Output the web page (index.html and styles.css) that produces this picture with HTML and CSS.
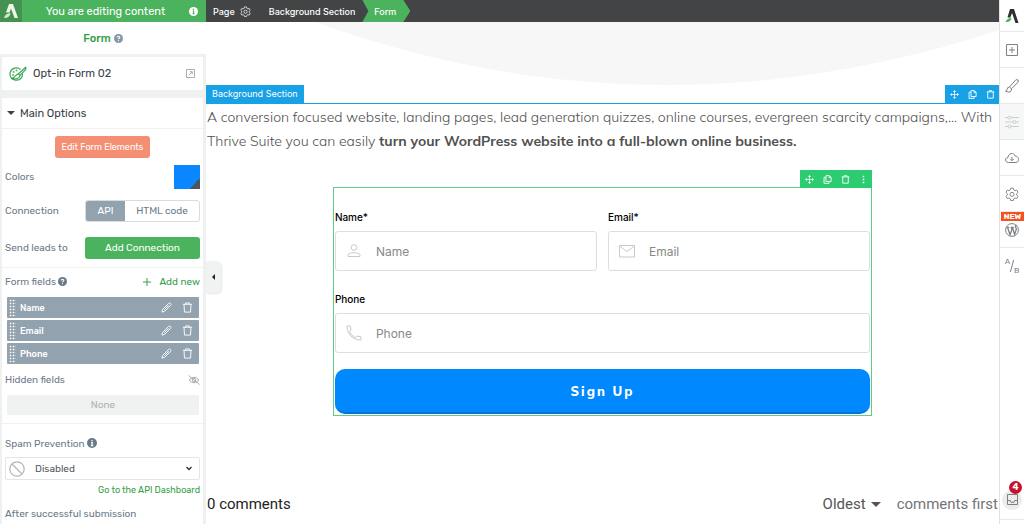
FILE: index.html
```html
<!DOCTYPE html>
<html lang="en">
<head>
    <meta charset="UTF-8">
    <title>Form | Editor</title>
    <meta name="viewport" content="width=device-width, initial-scale=1.0">
    <link rel="stylesheet" href="styles.css">
</head>
<body>
    <!-- Shared icons -->
    <svg class="sprite" aria-hidden="true">
        <symbol id="i-help" viewBox="0 0 12 12"><circle cx="6" cy="6" r="6" fill="currentColor"/><path d="M4.200 4.600C4.300 2.500 7.800 2.600 7.700 4.600C7.600 5.800 6 5.700 6 7.100M6 8.200V9.600" fill="none" stroke="#fff" stroke-width="1.500"/></symbol>
        <symbol id="i-info" viewBox="0 0 12 12"><circle cx="6" cy="6" r="6" fill="currentColor"/><path d="M6 2.400V4M4.800 5.400H6.200V9M4.600 9H7.500" fill="none" stroke="var(--hole, #fff)" stroke-width="1.500"/></symbol>
        <symbol id="i-gear" viewBox="0 0 24 24"><path d="M9.800 2h4.400l.7 3 2.300 1.300 2.900-.9 2.200 3.800-2.200 2.100v2.600l2.200 2.100-2.200 3.800-2.900-.9-2.300 1.300-.7 3H9.800l-.7-3-2.300-1.300-2.900.9L1.700 16l2.200-2.100v-2.600L1.700 9.200l2.200-3.800 2.900.9L9.100 5z" fill="none" stroke="currentColor" stroke-width="1.600" stroke-linejoin="round"/><circle cx="12" cy="12.600" r="3.500" fill="none" stroke="currentColor" stroke-width="1.600"/></symbol>
        <symbol id="i-pen" viewBox="0 0 12 12"><path d="M1 11L1.800 8L8.300 1.500Q9.300.6 10.400 1.600T10.500 3.700L4 10.200ZM3.500 8.500L8.400 3.600" fill="none" stroke="currentColor" stroke-linejoin="round"/></symbol>
        <symbol id="i-trash" viewBox="0 0 12 12"><path d="M1 2.500H11M4 2.500V1H8V2.500M2.200 2.500L2.700 11H9.300L9.800 2.500" fill="none" stroke="currentColor"/></symbol>
        <symbol id="i-move" viewBox="0 0 12 12"><path d="M6 1.500V10.500M1.500 6H10.500" stroke="currentColor"/><path d="M6 0L8 2.600H4ZM6 12L8 9.400H4ZM0 6L2.600 4V8ZM12 6L9.400 4V8Z" fill="currentColor"/></symbol>
        <symbol id="i-copy" viewBox="0 0 12 12"><path d="M4 .8H8.600L10.800 3V8.700H4ZM8.200 1V3.500H10.500M3.800 3H1.400V11.200H8V9" fill="none" stroke="currentColor" stroke-width="1.200"/></symbol>
        <symbol id="i-bin" viewBox="0 0 12 12"><path d="M1 2.500H11M4 2V1H8V2M2.300 2.500V10.900H9.700V2.500" fill="none" stroke="currentColor" stroke-width="1.200"/></symbol>
        <symbol id="i-dots" viewBox="0 0 12 12"><path d="M5 1H7V3H5ZM5 5H7V7H5ZM5 9H7V11H5Z" fill="currentColor"/></symbol>
    </svg>

    <aside class="sidebar">
        <header class="side-head">
            <span class="side-logo">
                <svg width="14" height="16" viewBox="0 0 14 16"><path d="M5 1H9L14 15H10.500L7 5.500L5.500 9.500H2Z" fill="#eef5e6"/><path d="M0 15Q1 10.500 6.500 10Q6 15 0 15Z" fill="#d5e8cb"/></svg>
            </span>
            <span class="side-title">You are editing content</span>
            <svg class="info" width="9" height="9"><use href="#i-info"/></svg>
        </header>
        <div class="side-sub">Form <svg width="9" height="9"><use href="#i-help"/></svg></div>

        <div class="card template">
            <svg width="18" height="16" viewBox="0 0 18 16" fill="none" stroke="#3fa757" stroke-width="1.200"><path d="M11.500 3.500C8.500.8 2.800 1.800 1.300 6C0 10.500 3 14 6.500 14.200C11 14.500 13.800 11.500 13.500 7.500"/><path d="M16.800 1.200L9.500 7.800L11 9.300L16.600 3.600ZM9.500 7.800C7.200 8 6.500 11 2.500 12.600C8 13.500 11 11.800 11 9.300" stroke-linejoin="round"/><circle cx="4.500" cy="6" r=".3"/><circle cx="7.500" cy="4.500" r=".3"/><circle cx="4" cy="9" r=".3"/></svg>
            <span>Opt-in Form 02</span>
            <a href="#" class="open" aria-label="Open template">
                <svg width="9" height="9" viewBox="0 0 9 9" fill="none" stroke="currentColor" stroke-width=".8"><path d="M.5.5H8.500V8.500H.5ZM2.700 6.300L6.200 2.800M3.800 2.700H6.300V5.200"/></svg>
            </a>
        </div>

        <section class="card options">
            <button class="options-head"><span class="caret"></span>Main Options</button>
            <div class="group">
                <button class="btn edit-btn">Edit Form Elements</button>
                <div class="row color-row">
                    <span>Colors</span>
                    <button class="swatch" aria-label="Pick a color"></button>
                </div>
                <div class="row">
                    <span>Connection</span>
                    <div class="toggle control">
                        <button class="active">API</button>
                        <button>HTML code</button>
                    </div>
                </div>
                <div class="row">
                    <span>Send leads to</span>
                    <button class="btn add-btn control">Add Connection</button>
                </div>
            </div>
            <div class="group">
                <div class="row label-row">
                    <span>Form fields <svg width="9" height="9"><use href="#i-help"/></svg></span>
                    <button class="add-new"><svg width="8" height="8" viewBox="0 0 8 8"><path d="M4 0V8M0 4H8" stroke="currentColor"/></svg>Add new</button>
                </div>
                <ul class="fields">
                    <li><span class="grip"></span><b>Name</b><button aria-label="Edit Name"><svg width="11" height="11"><use href="#i-pen"/></svg></button><button aria-label="Delete Name"><svg width="11" height="11"><use href="#i-trash"/></svg></button></li>
                    <li><span class="grip"></span><b>Email</b><button aria-label="Edit Email"><svg width="11" height="11"><use href="#i-pen"/></svg></button><button aria-label="Delete Email"><svg width="11" height="11"><use href="#i-trash"/></svg></button></li>
                    <li><span class="grip"></span><b>Phone</b><button aria-label="Edit Phone"><svg width="11" height="11"><use href="#i-pen"/></svg></button><button aria-label="Delete Phone"><svg width="11" height="11"><use href="#i-trash"/></svg></button></li>
                </ul>
                <div class="row label-row hidden-row">
                    <span>Hidden fields</span>
                    <svg class="eye" width="12" height="10" viewBox="0 0 12 10" fill="none" stroke="currentColor" stroke-width=".9"><path d="M1 5Q6-.5 11 5Q6 10.500 1 5ZM.5.5L11.500 9.500"/><circle cx="6" cy="5" r="1.800"/></svg>
                </div>
                <div class="none">None</div>
            </div>
            <div class="group last">
                <label class="spam-label" for="spam">Spam Prevention <svg width="10" height="10"><use href="#i-info"/></svg></label>
                <div class="select">
                    <svg width="16" height="16" viewBox="0 0 16 16" fill="none" stroke="#b5b5b5" stroke-width="1.200"><circle cx="8" cy="8" r="7.200"/><path d="M3 3L13 13"/></svg>
                    <select id="spam">
                        <option>Disabled</option>
                    </select>
                    <svg width="6" height="5" viewBox="0 0 6 5"><path d="M.5 1L3 3.500L5.500 1" fill="none" stroke="#333" stroke-width="1.400"/></svg>
                </div>
                <a class="api-link" href="#">Go to the API Dashboard</a>
                <div class="after">After successful submission</div>
            </div>
        </section>
        <button class="collapse" aria-label="Collapse sidebar"></button>
    </aside>

    <main class="editor">
        <nav class="crumbs">
            <a href="#">Page <svg width="11" height="11"><use href="#i-gear"/></svg></a>
            <a href="#">Background Section</a>
            <a href="#" class="current">Form</a>
        </nav>
        <svg class="curve" viewBox="0 0 793 63" preserveAspectRatio="none"><path d="M109 0C330 80 560 85 793 8V0Z" fill="#f7f7f7"/></svg>
        <div class="section-bar">
            <span class="section-name">Background Section</span>
            <div class="tools">
                <button aria-label="Move"><svg width="9" height="9"><use href="#i-move"/></svg></button>
                <button aria-label="Duplicate"><svg width="9" height="9"><use href="#i-copy"/></svg></button>
                <button aria-label="Delete"><svg width="9" height="9"><use href="#i-bin"/></svg></button>
            </div>
        </div>
        <p class="intro">A conversion focused website, landing pages, lead generation quizzes, online courses, evergreen scarcity campaigns,... With Thrive Suite you can easily <b>turn your WordPress website into a full-blown online business.</b></p>

        <form class="optin">
            <div class="tools green">
                <button type="button" aria-label="Move"><svg width="9" height="9"><use href="#i-move"/></svg></button>
                <button type="button" aria-label="Duplicate"><svg width="9" height="9"><use href="#i-copy"/></svg></button>
                <button type="button" aria-label="Delete"><svg width="9" height="9"><use href="#i-bin"/></svg></button>
                <button type="button" aria-label="More"><svg width="9" height="9"><use href="#i-dots"/></svg></button>
            </div>
            <div class="field">
                <label for="name">Name*</label>
                <div class="input">
                    <svg width="16" height="16" viewBox="0 0 16 16"><circle cx="8" cy="4.500" r="2.800"/><path d="M2 13.500V12C2 9 14 9 14 12V13.500Z"/></svg>
                    <input id="name" type="text" placeholder="Name">
                </div>
            </div>
            <div class="field">
                <label for="email">Email*</label>
                <div class="input">
                    <svg width="16" height="16" viewBox="0 0 16 16"><path d="M.5 2.500H15.500V14H.5ZM.5 3L8 8.500L15.500 3"/></svg>
                    <input id="email" type="email" placeholder="Email">
                </div>
            </div>
            <div class="field wide">
                <label for="phone">Phone</label>
                <div class="input">
                    <svg width="16" height="16" viewBox="0 0 16 16"><path d="M1 1H4.200L5 5L3.300 6.500Q5.500 11 9.600 12.700L11.200 11L15 11.800V15C7 15.200 1 9 1 1Z"/></svg>
                    <input id="phone" type="tel" placeholder="Phone">
                </div>
            </div>
            <button type="submit" class="signup wide">Sign Up</button>
        </form>

        <footer class="comments">
            <span>0 comments</span>
            <button class="sort">Oldest <span class="caret"></span></button>
            <span class="muted">comments first</span>
        </footer>
    </main>

    <nav class="rail">
        <a href="#" class="rail-logo" aria-label="Home"><svg width="14" height="14" viewBox="0 0 14 14"><path d="M5 0H9L13.500 14H10.500L7 4L5.300 8.500H2.500Z" fill="#2d3033"/><path d="M.5 13Q1.500 9.500 6.500 8.800Q6 13.500.5 13Z" fill="#4bb35e"/></svg></a>
        <button aria-label="Add element"><svg width="12" height="12" viewBox="0 0 12 12"><path d="M.5.5H11.500V11.500H.5ZM6 3V9M3 6H9"/></svg></button>
        <button aria-label="Style"><svg width="14" height="14" viewBox="0 0 14 14"><path d="M4.500 8L10.500 1.200Q12 0 13 1T12.900 3.300L6.500 9.800ZM4.500 8Q2 8.200 2 10.500Q2 12 .5 12.200Q6.500 15 6.500 9.800"/></svg></button>
        <button class="dim" aria-label="Settings"><svg width="14" height="14" viewBox="0 0 14 14"><path d="M0 2.500H3M6 2.500H14M0 7H8M11 7H14M0 11.500H3M6 11.500H14"/><circle cx="4.500" cy="2.500" r="1.500"/><circle cx="9.500" cy="7" r="1.500"/><circle cx="4.500" cy="11.500" r="1.500"/></svg></button>
        <button aria-label="Cloud templates"><svg width="14" height="12" viewBox="0 0 14 12"><path d="M3.500 10.500C-.5 10.500-.2 5.500 3 5.500C3 1 9 0 10 4C14.500 4 14.500 10.500 11 10.500ZM7 5V8.500M5.300 7L7 8.700L8.700 7"/></svg></button>
        <button aria-label="Page settings"><svg width="14" height="14"><use href="#i-gear"/></svg></button>
        <button class="wp" aria-label="WordPress"><span class="new">NEW</span><svg width="14" height="14" viewBox="0 0 14 14"><circle cx="7" cy="7" r="6.400"/><path d="M1.500 4.300H4.200M5.500 4.300H8.800M2.500 4.300L5 11.700L7 6.300L5.900 4.300M7.400 4.300L9.600 11.500L11.300 6.500Q11.300 5 10.400 3.500Q10.400 2.300 11.500 2.500" stroke-width="1.300"/></svg></button>
        <button class="ab" aria-label="A/B test"><span>A</span><svg width="4" height="12" viewBox="0 0 4 12"><path d="M3.700 0L.3 12"/></svg><span>B</span></button>
        <button class="inbox" aria-label="Notifications"><span class="disc"><svg width="11" height="11" viewBox="0 0 11 11"><path d="M.5.5H10.500V10.500H.5ZM.5 6.500H3.300L4 8.300H7L7.700 6.500H10.500"/></svg></span><span class="count">4</span></button>
    </nav>
</body>
</html>
```
FILE: styles.css
```css
* {
    box-sizing: border-box;
}
body {
    margin: 0;
    height: 100vh;
    display: flex;
    overflow: hidden;
    background: #fff;
    font-family: Rubik, Roboto, Arial, sans-serif;
    font-size: 10px;
    color: #6b7a88;
}
button {
    margin: 0;
    padding: 0;
    border: none;
    background: none;
    font: inherit;
    color: inherit;
    cursor: pointer;
}
a {
    color: inherit;
    text-decoration: none;
}
svg {
    flex: none;
}
.sprite {
    position: absolute;
    width: 0;
    height: 0;
}
.caret {
    border: 4px solid transparent;
    border-top-color: currentColor;
    border-bottom: none;
}

/* Sidebar */
.sidebar {
    position: relative;
    flex: none;
    width: 206px;
    display: flex;
    flex-direction: column;
    background: #eff1f1;
}
.side-head {
    flex: none;
    height: 22px;
    display: flex;
    align-items: center;
    background: #4bb35e;
    color: #fff;
    font-size: 11px;
}
.side-logo {
    width: 22px;
    height: 22px;
    display: flex;
    align-items: center;
    justify-content: center;
    background: #43924f;
}
.side-title {
    flex: 1;
    text-align: center;
}
.side-head .info {
    --hole: #4bb35e;
    margin-right: 8px;
}
.side-sub {
    flex: none;
    height: 32px;
    display: flex;
    align-items: center;
    justify-content: center;
    gap: 3px;
    background: #fff;
    color: #35a048;
    font-size: 11px;
    font-weight: 500;
}
.side-sub svg {
    color: #8796a5;
}
.card {
    flex: none;
    margin: 3px 3px 0 2px;
    background: #fff;
}
.template {
    height: 33px;
    display: flex;
    align-items: center;
    gap: 6px;
    padding: 0 8px 0 7px;
    color: #3a4148;
    font-size: 11px;
}
.template span {
    -webkit-text-stroke: 0;
    font-weight: 450;
}
.open {
    margin-left: auto;
    display: flex;
    color: #999;
}
.options {
    flex: 1;
    margin-top: 8px;
}
.options-head {
    width: 100%;
    height: 31px;
    display: flex;
    align-items: center;
    gap: 5px;
    padding-left: 5px;
    border-bottom: 1px solid #f0f1f1;
    color: #3a4148;
    font-size: 11px;
    font-weight: 450;
}
.group {
    display: flex;
    flex-direction: column;
    padding: 0 3px;
    border-bottom: 1px solid #f0f1f1;
}
.group.last {
    border: none;
}
.btn {
    height: 22px;
    border-radius: 3px;
    color: #fff;
}
.edit-btn {
    align-self: center;
    margin-top: 7px;
    padding: 0 7px;
    background: #f48f74;
    font-size: 9px;
}
.row {
    display: flex;
    align-items: center;
    justify-content: space-between;
    min-height: 22px;
    margin-bottom: 15px;
}
.color-row {
    margin: 7px 0 11px;
}
.row:last-child {
    margin-bottom: 8px;
}
.swatch {
    width: 26px;
    height: 24px;
    background: linear-gradient(135deg, #0a86ff 78%, #4c5560 78%);
}
.control {
    width: 115px;
}
.toggle {
    height: 22px;
    display: flex;
    border: 1px solid #d7dcdf;
    border-radius: 3px;
    overflow: hidden;
}
.toggle button {
    flex: 1;
}
.toggle .active {
    flex: none;
    width: 39px;
    background: #93a2af;
    color: #fff;
}
.add-btn {
    background: #4bb35e;
}
.label-row {
    margin: 3px 0 4px;
}
.hidden-row {
    margin-top: 5px;
}
.label-row svg,
.spam-label svg {
    vertical-align: -1px;
}
.add-new {
    display: flex;
    align-items: center;
    gap: 8px;
    color: #35a048;
}
.fields {
    display: flex;
    flex-direction: column;
    gap: 2px;
    margin: 0;
    padding: 0 1px 0 2px;
    list-style: none;
}
.fields li {
    height: 21px;
    display: flex;
    align-items: center;
    gap: 10px;
    padding: 0 6px 0 2px;
    border-radius: 1px;
    background: #93a2af;
    color: #fff;
    font-size: 9px;
}
.fields b {
    flex: 1;
    margin-left: -6px;
    font-weight: 500;
}
.fields button {
    display: flex;
}
.grip {
    width: 7px;
    height: 18px;
    background: radial-gradient(circle, #fff 40%, transparent 50%) 0 0 / 3px 3px;
}
.eye {
    color: #a5a5a5;
}
.none {
    height: 20px;
    margin: 0 1px 8px 2px;
    line-height: 20px;
    border-radius: 2px;
    background: #f0f1f1;
    color: #adb1b5;
    text-align: center;
}
.spam-label {
    margin-top: 13px;
    line-height: 14px;
}
.select {
    height: 23px;
    margin-top: 6px;
    display: flex;
    align-items: center;
    padding: 0 7px 0 3px;
    border: 1px solid #e3e6e8;
    border-radius: 2px;
}
.select select {
    flex: 1;
    margin: 0;
    padding: 0 0 0 10px;
    border: none;
    background: none;
    appearance: none;
    color: #4e5862;
    font: inherit;
}
.api-link {
    align-self: flex-end;
    color: #35a048;
    font-size: 9px;
    line-height: 20px;
}
.after {
    margin-top: 6px;
    line-height: 16px;
}
.collapse {
    position: absolute;
    left: 206px;
    top: 261px;
    z-index: 1;
    width: 15px;
    height: 32px;
    display: flex;
    align-items: center;
    justify-content: center;
    border-radius: 0 5px 5px 0;
    background: #f1f2f2;
    box-shadow: 1px 1px 2px rgba(0,0,0,0.1);
}
.collapse::before {
    content: "";
    border: 3px solid transparent;
    border-right-color: #222;
    border-left: none;
}

/* Editor canvas */
.editor {
    flex: 1;
    min-width: 0;
    display: flex;
    flex-direction: column;
}
.crumbs {
    flex: none;
    height: 22px;
    display: flex;
    align-items: center;
    gap: 18px;
    padding-left: 7px;
    background: #434446;
    color: #fff;
    font: 500 9px Inter, Arial, sans-serif;
}
.crumbs a {
    display: flex;
    align-items: center;
    gap: 5px;
    height: 100%;
}
.crumbs .current {
    margin-left: -11px;
    padding: 0 14px 0 12px;
    background: #4bb35e;
    clip-path: polygon(0 0, calc(100% - 7px) 0, 100% 50%, calc(100% - 7px) 100%, 0 100%, 6px 50%);
}
.curve {
    width: 100%;
    height: 63px;
}
.section-bar {
    flex: none;
    height: 19px;
    display: flex;
    justify-content: space-between;
    border-bottom: 1px solid #19a1e6;
}
.section-name {
    padding: 0 6px;
    background: #19a1e6;
    color: #fff;
    font: 9px/18px Inter, Arial, sans-serif;
}
.tools {
    display: flex;
    background: #19a1e6;
    color: #fff;
}
.tools button {
    width: 18px;
    display: flex;
    align-items: center;
    justify-content: center;
}
.intro {
    margin: 1px 1px 0;
    color: #505050;
    font: 300 14px/24px Mulish, "Open Sans", sans-serif;
}
.intro b {
    font-weight: 700;
}
.optin {
    position: relative;
    width: 68%;
    margin: 34px auto 0;
    display: grid;
    grid-template-columns: 1fr 1fr;
    column-gap: 11px;
    row-gap: 16px;
    padding: 22px 1px 1px;
    border: 1px solid #5fcb88;
}
.tools.green {
    position: absolute;
    right: -1px;
    bottom: 100%;
    height: 18px;
    background: #2ccc71;
}
.wide {
    grid-column: 1 / -1;
}
.field.wide {
    padding-top: 5px;
}
.field label {
    display: block;
    margin-bottom: 6px;
    color: #000;
    font: 500 10px/15px Inter, Arial, sans-serif;
}
.input {
    height: 40px;
    display: flex;
    align-items: center;
    gap: 14px;
    padding: 0 11px 0 10px;
    border: 1px solid #dedede;
    border-radius: 3px;
}
.input svg {
    fill: none;
    stroke: #c9c9c9;
}
.input input {
    flex: 1;
    min-width: 0;
    padding: 0;
    border: none;
    outline: none;
    background: none;
    color: #333;
    font: 12px Inter, Arial, sans-serif;
}
.input input::placeholder {
    color: #888;
}
.signup {
    height: 45px;
    border-bottom: 2px solid #0a6fd8;
    border-radius: 10px;
    background: #0088ff;
    color: #fff;
    font: 800 13px Mulish, "Open Sans", sans-serif;
    letter-spacing: 2px;
}
.comments {
    margin-top: auto;
    display: flex;
    align-items: center;
    padding: 0 1px 9px;
    color: #222;
    font-family: Roboto, Arial, sans-serif;
    font-size: 15px;
    line-height: 22px;
}
.sort {
    margin-left: auto;
    display: flex;
    align-items: center;
    gap: 5px;
    color: #555;
}
.sort .caret {
    border-width: 5px 5px 0;
}
.muted {
    margin-left: 16px;
    color: #757575;
}

/* Right rail */
.rail {
    flex: none;
    width: 25px;
    display: flex;
    flex-direction: column;
    border-left: 1px solid #e2e2e2;
    color: #7b8187;
}
.rail > * {
    position: relative;
    flex: none;
    height: 36px;
    display: flex;
    align-items: center;
    justify-content: center;
    border-bottom: 1px solid #e8e8e8;
}
.rail svg {
    fill: none;
    stroke: currentColor;
}
.rail .rail-logo {
    height: 32px;
}
.rail-logo svg {
    stroke: none;
}
.rail .dim {
    background: #f6f7f7;
    color: #ccc;
}
.rail .new {
    position: absolute;
    top: 0;
    left: 1px;
    right: 0;
    background: #f4511e;
    color: #fff;
    font-size: 8px;
    font-weight: 700;
    line-height: 9px;
}
.rail .ab {
    border: none;
    font-size: 8px;
}
.ab span:first-child {
    align-self: flex-start;
    margin-top: 9px;
}
.ab span:last-child {
    align-self: flex-end;
    margin-bottom: 9px;
}
.rail .inbox {
    margin: auto 0 4px;
    height: 40px;
}
.disc {
    width: 20px;
    height: 20px;
    display: flex;
    align-items: center;
    justify-content: center;
    border-radius: 50%;
    background: #ececec;
}
.count {
    position: absolute;
    top: 1px;
    right: 2px;
    width: 13px;
    height: 13px;
    border-radius: 50%;
    background: #c8102e;
    color: #fff;
    font-size: 9px;
    font-weight: 700;
    line-height: 13px;
}
```
